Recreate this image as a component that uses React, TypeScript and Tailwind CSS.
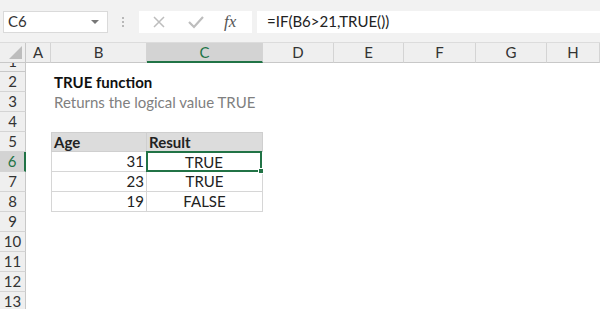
const cols = [
  { key: "A", w: "w-[25px]" },
  { key: "B", w: "w-[96px]" },
  { key: "C", w: "w-[116px]" },
  { key: "D", w: "w-[71px]" },
  { key: "E", w: "w-[70px]" },
  { key: "F", w: "w-[72px]" },
  { key: "G", w: "w-[71px]" },
  { key: "H", w: "w-[53px]" },
];

const rows = [2, 3, 4, 5, 6, 7, 8, 9, 10, 11, 12, 13];

const data: Record<number, { age: string; result: string }> = {
  6: { age: "31", result: "TRUE" },
  7: { age: "23", result: "TRUE" },
  8: { age: "19", result: "FALSE" },
};

const RowHead = ({ n }: { n: number }) => (
  <div
    className={`w-[26px] shrink-0 h-full flex items-center justify-center border-b border-[#d4d4d4] text-[15px] ${
      n === 6
        ? "bg-[#d3d3d3] text-[#217346] border-r-2 border-r-[#217346]"
        : "bg-[#efefef] text-[#333] border-r border-r-[#c8c8c8]"
    }`}
  >
    {n}
  </div>
);

const SheetRow = ({ n }: { n: number }) => {
  const d = data[n];
  return (
    <div className="flex h-[20px] shrink-0">
      <RowHead n={n} />
      <div className="w-[25px] shrink-0" />
      {n === 2 && (
        <div className="pl-[3px] font-bold text-[15px] text-[#111] leading-[20px] whitespace-nowrap">
          TRUE function
        </div>
      )}
      {n === 3 && (
        <div className="pl-[3px] text-[15px] text-[#808080] leading-[20px] whitespace-nowrap">
          Returns the logical value TRUE
        </div>
      )}
      {n === 5 && (
        <>
          <div className="w-[96px] shrink-0 bg-[#dcdcdc] border border-[#cfcfcf] pl-[2px] font-bold text-[15px] leading-[18px]">
            Age
          </div>
          <div className="w-[116px] shrink-0 bg-[#dcdcdc] border border-l-0 border-[#cfcfcf] pl-[2px] font-bold text-[15px] leading-[18px]">
            Result
          </div>
        </>
      )}
      {d && (
        <>
          <div className="w-[96px] shrink-0 border border-t-0 border-[#d6d6d6] pr-[2px] text-right text-[15px] leading-[19px]">
            {d.age}
          </div>
          {n === 6 ? (
            <div className="relative w-[116px] shrink-0 border-2 border-[#217346] -mt-[1px] -ml-[1px] text-center text-[15px] leading-[18px]">
              {d.result}
              <div className="absolute -right-[4px] -bottom-[4px] w-[6px] h-[6px] bg-[#217346] border border-white" />
            </div>
          ) : (
            <div className="w-[116px] shrink-0 border-r border-b border-[#d6d6d6] text-center text-[15px] leading-[19px]">
              {d.result}
            </div>
          )}
        </>
      )}
    </div>
  );
};

export default function App() {
  return (
    <div className="w-[600px] h-[309px] overflow-hidden bg-white font-['Lato','Liberation_Sans',sans-serif] text-[#222]">
      {/* ribbon / formula bar */}
      <div className="h-[43px] bg-[#f2f2f2] flex items-center pt-[1px] border-b border-[#dcdcdc]">
        <div className="ml-[3px] w-[105px] h-[22px] bg-white border border-[#dadada] flex items-center justify-between pl-[4px] pr-[8px] text-[15px] text-[#333]">
          <span>C6</span>
          <span className="w-0 h-0 border-l-[4px] border-r-[4px] border-t-[4px] border-l-transparent border-r-transparent border-t-[#777]" />
        </div>
        <div className="ml-[14px] flex flex-col gap-[2px]">
          <span className="w-[2px] h-[2px] bg-[#b8b8b8]" />
          <span className="w-[2px] h-[2px] bg-[#b8b8b8]" />
          <span className="w-[2px] h-[2px] bg-[#b8b8b8]" />
        </div>
        <div className="ml-[15px] w-[113px] h-[22px] bg-white flex items-center">
          <svg width="14" height="14" viewBox="0 0 14 14" className="ml-[13px]">
            <path d="M2 2L12 12M12 2L2 12" stroke="#bdbdbd" strokeWidth="1.5" />
          </svg>
          <svg width="16" height="14" viewBox="0 0 16 14" className="ml-[22px]">
            <path d="M1 7L6 12L15 2" stroke="#bdbdbd" strokeWidth="2.2" fill="none" />
          </svg>
          <span className="ml-[20px] font-['Liberation_Serif',serif] italic text-[17px] text-[#555] leading-none">
            fx
          </span>
        </div>
        <div className="ml-[5px] flex-1 h-[22px] bg-white flex items-center pl-[10px] text-[15px] text-[#222]">
          =IF(B6&gt;21,TRUE())
        </div>
      </div>

      {/* column headers */}
      <div className="flex h-[20px]">
        <div className="w-[26px] shrink-0 bg-[#efefef] border-r border-b border-[#c8c8c8] flex items-end justify-end p-[3px]">
          <svg width="13" height="13" viewBox="0 0 13 13">
            <path d="M13 0L13 13L0 13Z" fill="#bdbdbd" />
          </svg>
        </div>
        {cols.map((c) => (
          <div
            key={c.key}
            className={`${c.w} shrink-0 flex items-center justify-center text-[15px] border-r border-[#d4d4d4] ${
              c.key === "C"
                ? "bg-[#d3d3d3] text-[#217346] border-b-2 border-b-[#217346]"
                : "bg-[#efefef] text-[#333] border-b border-b-[#c8c8c8]"
            }`}
          >
            {c.key}
          </div>
        ))}
      </div>

      {/* row 1, mostly scrolled out of view */}
      <div className="flex h-[9px] overflow-hidden">
        <div className="w-[26px] shrink-0 bg-[#efefef] border-r border-b border-[#c8c8c8] flex items-end justify-center overflow-hidden">
          <span className="text-[15px] leading-[20px] text-[#333]">1</span>
        </div>
      </div>

      {rows.map((n) => (
        <SheetRow key={n} n={n} />
      ))}
    </div>
  );
}
